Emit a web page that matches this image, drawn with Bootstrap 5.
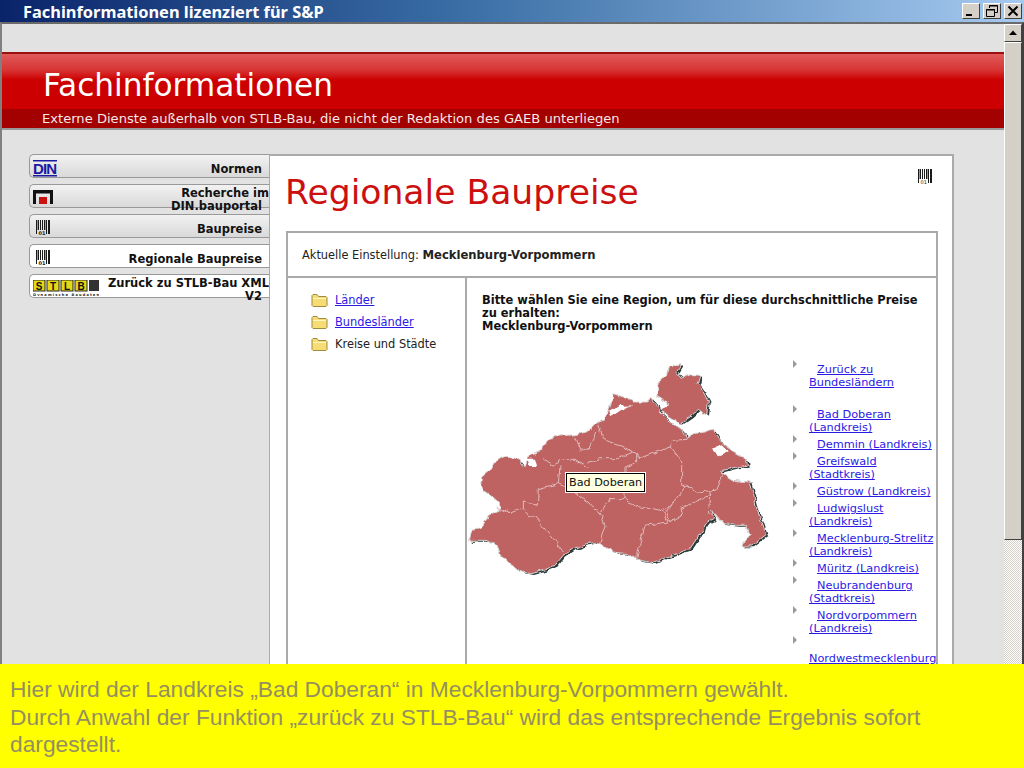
<!DOCTYPE html>
<html lang="de">
<head>
<meta charset="utf-8">
<title>Fachinformationen</title>
<link href="https://cdn.jsdelivr.net/npm/bootstrap@5.3.0/dist/css/bootstrap.min.css" rel="stylesheet">
<style>
html,body{height:768px;overflow:hidden}
body{width:1024px;font-family:"DejaVu Sans",Verdana,sans-serif;font-size:11px;line-height:13px;background:#e2e2e2;color:#222}
.ttl-bar{height:22px;flex:none;background:linear-gradient(90deg,#0a246a 0,#3a6ea5 45%,#a6caf0 100%);padding:0 2px 0 23px}
.ttl-text{font-family:"Noto Sans","Liberation Sans",sans-serif;font-weight:700;font-size:16.4px;line-height:21px;color:#fff;white-space:nowrap}
.win-btn{width:18px;height:16px;background:#d4d0c8;border:1px solid;border-color:#fff #404040 #404040 #fff;margin-left:3px}
.win-btn svg{display:block}
.win-body{height:642px;flex:none;overflow:hidden;border-top:2px solid #6a6a6a;border-left:2px solid #808080;border-right:2px solid #404040}
.page-pane{flex:1;min-width:0;background:#e2e2e2;overflow:hidden;padding-top:28px}
.red-band{border-top:2px solid #9c1010;border-bottom:2px solid #999}
.red-top{height:55px;background:linear-gradient(180deg,#e05a5a 0,#d83434 16px,#cc0000 26px,#cc0000 100%);color:#fff;font-size:31.2px;line-height:62px;padding-left:41px}
.red-sub{height:19px;background:#a30000;color:#f4e8e8;font-size:13.1px;line-height:19px;padding-left:40px;white-space:nowrap}
.main-row{padding:24px 0 0 27px}
.side-nav{width:240px;flex:none}
.side-item{height:24px;margin-bottom:6px;border:1px solid #999;border-right:0;border-radius:5px 0 0 5px;background:linear-gradient(180deg,#f2f2f2,#d9d9d9);font-weight:700;font-size:11.5px;text-align:right;color:#111;padding:1px 7px 0 1px}
.side-item.is-on{background:#fff}
.side-item .side-ico{flex:none;margin-left:2px}
.side-lbl{flex:1;min-width:0}
.side-two{padding-top:1px}
.push-r{margin-right:-7px;white-space:nowrap}
.content-box{width:685px;flex:none;height:600px;background:#fff;border-top:2px solid #aaa;border-right:2px solid #aaa;border-left:1px solid #aaa;padding:0 14px 0 16px}
.big-head{height:75px}
.big-head h1{font-family:"DejaVu Sans",Verdana,sans-serif;font-size:34.6px;line-height:40px;font-weight:400;color:#cc1010;margin:16px 0 0 -1px}
.big-head svg{margin:13px 5px 0 0}
.inner-tb{border:2px solid #aaa;height:500px}
.inner-top{height:45px;border-bottom:2px solid #aaa;padding-left:14px;line-height:44px;font-size:11.4px}
.inner-top b{font-size:11.6px}
.tree-col{width:179px;flex:none;border-right:2px solid #aaa;padding:11px 0 0 23px}
.tree-row{height:22px;font-size:11.4px}
.tree-row svg{margin-right:7px;flex:none}
a.blue-lnk{color:#2a1ae6;text-decoration:underline}
.right-col{flex:1;min-width:0;padding:16px 0 0 15px}
.pick-head{font-weight:700;color:#111;font-size:11.45px;line-height:13px;width:445px}
.map-row{margin-top:19px}
.map-wrap{width:320px;height:235px;flex:none;position:relative;margin:0 0 0 -22px}
.map-tip{position:absolute;left:106px;top:121px;background:#ffffe1;border:1px solid #000;box-shadow:0 0 0 1px #fff;color:#111;font-size:11.2px;line-height:17px;padding:0 2px;white-space:nowrap}
.reg-list{list-style:none;margin:11px 0 0 13px;padding:0;width:145px;font-size:11.3px;line-height:13px}
.reg-list li{margin-bottom:4px}
.reg-list li.gap-after{margin-bottom:19px}
.tri{width:16px;flex:none}
.tri i{display:block;width:0;height:0;margin-top:-3px;border-left:4px solid #9a9a9a;border-top:4px solid transparent;border-bottom:4px solid transparent}
.reg-txt{flex:1;min-width:0}
.reg-txt::before{content:"";display:inline-block;width:8px}
.scroll-col{width:18px;flex:none;background:repeating-conic-gradient(#fff 0 25%,#d4d0c8 0 50%) 0 0/2px 2px}
.scr-btn{height:18px;background:#d4d0c8;border:1px solid;border-color:#fff #404040 #404040 #fff}
.scr-thumb{height:498px;background:#d4d0c8;border:1px solid;border-color:#fff #404040 #404040 #fff}
.yellow-cap{height:104px;flex:none;background:#ff0;color:#958f60;font-family:"Liberation Sans",Arial,sans-serif;font-size:22.75px;line-height:27.5px;padding:12px 10px 0 10px;width:1024px}
</style>
</head>
<body class="d-flex flex-column">
<svg width="0" height="0" class="d-none"><defs>
  <g id="bar-ico"><path d="M3.500 0v14M5.500 0v10M7.500 0v10M9.500 0v10M11.500 0v10M13.500 0v14M15.500 0v14M16.500 0v14" stroke="#1a1a1a"/><path d="M4.500 0v10M12.500 0v10" stroke="#999"/></g>
  <g id="fold-ico"><path d="M1 12.500V2.500l1-1h4l1.500 2H15l1 1v8l-1 1H2z" fill="#f6dc74" stroke="#a08a40"/><path d="M2 5.500h13" stroke="#fff6c0"/></g>
</defs></svg>
<div class="ttl-bar d-flex align-items-center justify-content-between">
  <span class="ttl-text">Fachinformationen lizenziert für S&amp;P</span>
  <div class="d-flex">
    <div class="win-btn"><svg width="16" height="14" viewBox="0 0 16 14"><rect x="3" y="10" width="6" height="2" fill="#000"/></svg></div>
    <div class="win-btn"><svg width="16" height="14" viewBox="0 0 16 14"><path d="M5.500 4V1.500h8v7H11M2.500 5.500h8v7h-8z" fill="none" stroke="#000"/><path d="M5 2h9M2 6h9" stroke="#000"/></svg></div>
    <div class="win-btn"><svg width="16" height="14" viewBox="0 0 16 14"><path d="M3.500 2.500l9 9M12.500 2.500l-9 9" stroke="#000" stroke-width="2"/></svg></div>
  </div>
</div>
<div class="win-body d-flex">
  <div class="page-pane">
    <div class="red-band">
      <div class="red-top">Fachinformationen</div>
      <div class="red-sub">Externe Dienste außerhalb von STLB-Bau, die nicht der Redaktion des GAEB unterliegen</div>
    </div>
    <div class="main-row d-flex">
      <div class="side-nav">
        <div class="side-item d-flex">
          <svg class="side-ico mt-1" width="24" height="17" viewBox="0 0 24 17"><rect width="24" height="1.500" fill="#1a1aa0"/><rect y="15" width="24" height="1.500" fill="#1a1aa0"/><text x="0" y="13.500" font-family="Liberation Sans" font-weight="700" font-size="15" fill="#1a1aa0" textLength="24">DIN</text></svg>
          <span class="side-lbl pt-1 mt-1 lh-1">Normen</span>
        </div>
        <div class="side-item d-flex">
          <svg class="side-ico mt-1" width="22" height="15" viewBox="0 0 22 15"><path d="M0 14V0h20v14h-3V3.500H3V14z" fill="#111"/><rect x="6" y="7" width="8" height="7" fill="#cc1010"/></svg>
          <div class="side-lbl side-two"><span class="d-block push-r">Recherche im</span>DIN.bauportal</div>
        </div>
        <div class="side-item d-flex">
          <svg class="side-ico mt-1" width="18" height="16" viewBox="0 0 18 16"><use href="#bar-ico"/><text x="5.500" y="15" font-size="5" font-family="DejaVu Sans" fill="#222">01</text></svg>
          <span class="side-lbl mt-1 pt-1 lh-1">Baupreise</span>
        </div>
        <div class="side-item is-on d-flex">
          <svg class="side-ico mt-1" width="18" height="16" viewBox="0 0 18 16"><use href="#bar-ico"/><text x="5.500" y="15" font-size="5" font-family="DejaVu Sans" fill="#222">01</text></svg>
          <span class="side-lbl mt-1 pt-1 lh-1">Regionale Baupreise</span>
        </div>
        <div class="side-item is-on d-flex">
          <svg class="side-ico mt-1" width="66" height="16" viewBox="0 0 66 16"><g font-family="Liberation Sans" font-weight="700" font-size="10" text-anchor="middle"><rect width="12" height="11" fill="#e6d814" stroke="#222"/><text x="6" y="9.500" fill="#111">S</text><rect x="14" width="12" height="11" fill="#e6d814" stroke="#222"/><text x="20" y="9.500" fill="#111">T</text><rect x="28" width="12" height="11" fill="#e6d814" stroke="#222"/><text x="34" y="9.500" fill="#111">L</text><rect x="42" width="12" height="11" fill="#e6d814" stroke="#222"/><text x="48" y="9.500" fill="#111">B</text><rect x="56" width="10" height="11" fill="#333"/></g><text x="0" y="15.500" font-size="3.600" font-family="DejaVu Sans" fill="#222" textLength="66">Dynamische Baudaten</text></svg>
          <div class="side-lbl side-two"><span class="d-block push-r">Zurück zu STLB-Bau XML</span>V2</div>
        </div>
      </div>
      <div class="content-box">
        <div class="big-head d-flex justify-content-between align-items-start">
          <h1>Regionale Baupreise</h1>
          <svg width="18" height="16" viewBox="0 0 18 16"><use href="#bar-ico"/><text x="5.500" y="15" font-size="5" font-family="DejaVu Sans" fill="#222">01</text></svg>
        </div>
        <div class="inner-tb">
          <div class="inner-top">Aktuelle Einstellung: <b>Mecklenburg-Vorpommern</b></div>
          <div class="d-flex h-100">
            <div class="tree-col">
              <div class="tree-row d-flex align-items-center"><svg width="17" height="14" viewBox="0 0 17 14"><use href="#fold-ico"/></svg><a class="blue-lnk" href="#">Länder</a></div>
              <div class="tree-row d-flex align-items-center"><svg width="17" height="14" viewBox="0 0 17 14"><use href="#fold-ico"/></svg><a class="blue-lnk" href="#">Bundesländer</a></div>
              <div class="tree-row d-flex align-items-center"><svg width="17" height="14" viewBox="0 0 17 14"><use href="#fold-ico"/></svg><span>Kreise und Städte</span></div>
            </div>
            <div class="right-col">
              <div class="pick-head">Bitte wählen Sie eine Region, um für diese durchschnittliche Preise zu erhalten:<br>Mecklenburg-Vorpommern</div>
              <div class="map-row d-flex">
                <div class="map-wrap">
                  <svg width="320" height="235" viewBox="0 0 960 705">
                    <defs>
                      <filter id="rough" x="-5%" y="-5%" width="110%" height="110%"><feTurbulence type="fractalNoise" baseFrequency="0.045" numOctaves="2" seed="4"/><feDisplacementMap in="SourceGraphic" scale="16" xChannelSelector="R" yChannelSelector="G"/></filter>
                      <path id="mv-land" d="M28 565L35 535 60 530 75 510 85 490 105 480 125 462 105 440 75 420 62 400 65 375 90 355 105 330 130 315 160 318 180 325 195 345 205 315 225 305 245 295 250 280 270 258 300 252 345 248 380 240 405 215 430 205 440 185 450 165 460 125 490 135 520 150 560 150 575 135 590 160 600 180 630 210 665 235 680 262 700 245 735 240 760 232 775 260 800 285 830 305 860 325 862 340 830 345 790 355 780 360 820 385 870 390 880 425 890 470 905 510 918 548 890 570 875 582 845 582 870 548 860 520 830 520 790 515 770 490 755 475 765 500 745 510 720 545 690 590 650 605 620 615 580 632 540 625 500 605 460 600 430 580 410 570 380 575 340 590 310 610 285 640 250 655 215 665 185 660 150 635 120 605 110 580 75 565Z"/>
                      <path id="mv-isle" d="M625 45L665 35 650 60 665 78 690 68 720 70 712 95 725 110 745 150 740 190 715 172 690 195 660 215 620 190 600 170 625 150 590 130 600 80 620 70Z"/>
                    </defs>
                    <g filter="url(#rough)">
                    <g fill="#2f3a3a" transform="translate(7 4)"><use href="#mv-land"/><use href="#mv-isle"/></g>
                    <g fill="#bf6262" stroke="#d8d4d4" stroke-width="3"><use href="#mv-land"/><use href="#mv-isle"/></g>
                    <g fill="#fff"><path d="M445 180L480 162 520 160 500 165 470 185 450 195Z"/><path d="M590 135L612 148 625 160 605 165Z"/><path d="M755 290L785 280 805 300 770 315Z"/><path d="M200 320L225 320 232 345 210 345Z"/></g>
                    <g fill="none" stroke="#e0bcbc" stroke-width="3">
                      <path d="M415 215L430 262 490 285 530 305 540 318 630 285 640 265 680 262"/>
                      <path d="M250 320L282 340 300 325 345 325 385 350"/>
                      <path d="M385 330L420 320 470 320 520 300"/>
                      <path d="M345 250L362 295 390 290 410 240"/>
                      <path d="M630 285L665 330 665 400 680 400 710 420 770 415 790 365"/>
                      <path d="M530 305L530 330 495 345 495 440 520 460 610 480 640 450 680 400"/>
                      <path d="M300 340L295 395 235 410 232 460 190 450 190 470 205 490 225 495 250 525 280 560 310 600"/>
                      <path d="M295 395L345 420 420 480 435 520 420 570"/>
                      <path d="M495 440L450 440 425 480"/>
                      <path d="M750 420L745 480 760 490 780 500"/>
                      <path d="M610 480L625 510 555 520 540 575 530 620"/>
                      <path d="M750 430L660 470 665 490 630 510 620 480 640 450"/>
                      <path d="M110 465L150 485 185 470"/>
                    </g>
                    </g>
                  </svg>
                  <div class="map-tip">Bad Doberan</div>
                </div>
                <ul class="reg-list">
                  <li class="d-flex gap-after"><span class="tri"><i></i></span><span class="reg-txt"><a class="blue-lnk" href="#">Zurück zu Bundesländern</a></span></li>
                  <li class="d-flex"><span class="tri"><i></i></span><span class="reg-txt"><a class="blue-lnk" href="#">Bad Doberan (Landkreis)</a></span></li>
                  <li class="d-flex"><span class="tri"><i></i></span><span class="reg-txt"><a class="blue-lnk" href="#">Demmin (Landkreis)</a></span></li>
                  <li class="d-flex"><span class="tri"><i></i></span><span class="reg-txt"><a class="blue-lnk" href="#">Greifswald (Stadtkreis)</a></span></li>
                  <li class="d-flex"><span class="tri"><i></i></span><span class="reg-txt"><a class="blue-lnk" href="#">Güstrow (Landkreis)</a></span></li>
                  <li class="d-flex"><span class="tri"><i></i></span><span class="reg-txt"><a class="blue-lnk" href="#">Ludwigslust (Landkreis)</a></span></li>
                  <li class="d-flex"><span class="tri"><i></i></span><span class="reg-txt"><a class="blue-lnk" href="#">Mecklenburg-Strelitz (Landkreis)</a></span></li>
                  <li class="d-flex"><span class="tri"><i></i></span><span class="reg-txt"><a class="blue-lnk" href="#">Müritz (Landkreis)</a></span></li>
                  <li class="d-flex"><span class="tri"><i></i></span><span class="reg-txt"><a class="blue-lnk" href="#">Neubrandenburg (Stadtkreis)</a></span></li>
                  <li class="d-flex"><span class="tri"><i></i></span><span class="reg-txt"><a class="blue-lnk" href="#">Nordvorpommern (Landkreis)</a></span></li>
                  <li class="d-flex"><span class="tri"><i></i></span><span class="reg-txt"><a class="blue-lnk" href="#">Nordwestmecklenburg</a></span></li>
                </ul>
              </div>
            </div>
          </div>
        </div>
      </div>
    </div>
  </div>
  <div class="scroll-col">
    <div class="scr-btn"><svg width="16" height="16" viewBox="0 0 16 16" class="d-block"><path d="M4 10h8L8 5.500z" fill="#000"/></svg></div>
    <div class="scr-thumb"></div>
  </div>
</div>
<div class="yellow-cap">Hier wird der Landkreis „Bad Doberan“ in Mecklenburg-Vorpommern gewählt.<br>Durch Anwahl der Funktion „zurück zu STLB-Bau“ wird das entsprechende Ergebnis sofort dargestellt.</div>
<script src="https://cdn.jsdelivr.net/npm/bootstrap@5.3.0/dist/js/bootstrap.bundle.min.js"></script>
</body>
</html>
